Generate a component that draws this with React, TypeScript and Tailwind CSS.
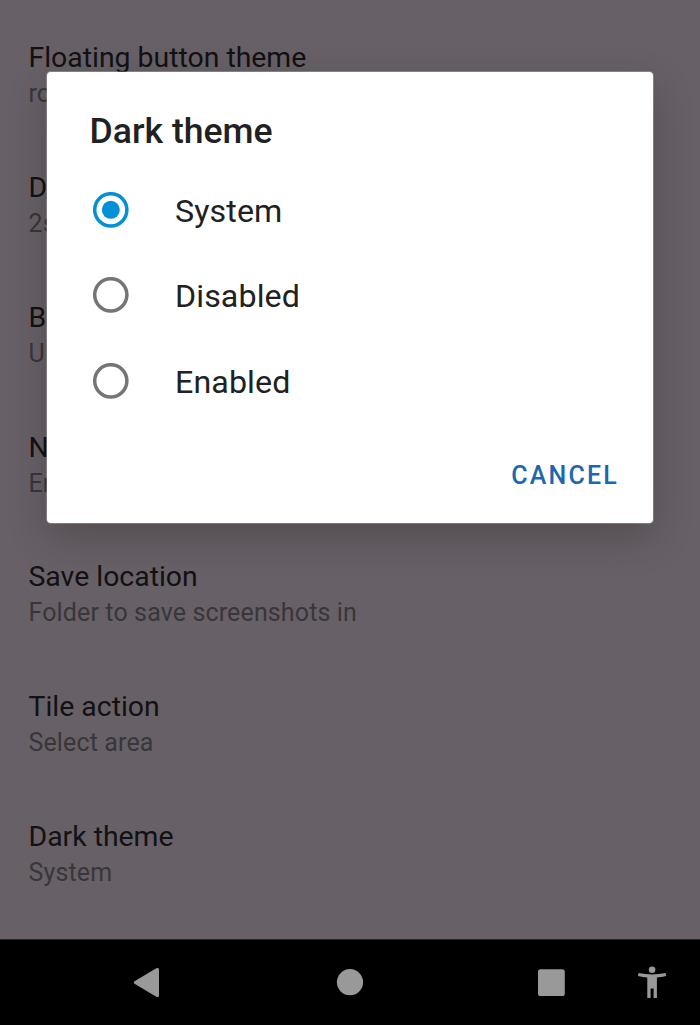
import React from "react";

const settings = [
  { title: "Floating button theme", summary: "round" },
  { title: "Delay", summary: "2s" },
  { title: "Button", summary: "U" },
  { title: "Notification", summary: "Enabled" },
  { title: "Save location", summary: "Folder to save screenshots in" },
  { title: "Tile action", summary: "Select area" },
  { title: "Dark theme", summary: "System" },
];

function Radio({ checked }: { checked: boolean }) {
  return (
    <svg width="36" height="36" viewBox="0 0 36 36" className={checked ? "text-[#0390d7]" : "text-[#757575]"}>
      <circle cx="17.8" cy="17.8" r="16.1" fill="none" stroke="currentColor" strokeWidth="3.5" />
      {checked && <circle cx="17.8" cy="17.8" r="9" fill="currentColor" />}
    </svg>
  );
}

export default function App() {
  return (
    <div className="relative flex h-[1025px] w-[700px] flex-col overflow-hidden bg-[#676066] font-['Roboto',sans-serif]">
      <main className="h-[939px] shrink-0 overflow-hidden pt-[40.3px] pl-[28.5px]">
        {settings.map((s) => (
          <div key={s.title} className="h-[129.75px] whitespace-nowrap">
            <div className="text-[28.4px] leading-[36px] text-[#121113]">{s.title}</div>
            <div className="text-[25px] leading-[36px] tracking-[0.13px] text-[#39363a]">{s.summary}</div>
          </div>
        ))}
      </main>

      <nav className="h-[86px] shrink-0 border-t border-[#292629] bg-black text-[#999999]">
        <svg width="700" height="85" viewBox="0 940 700 85" fill="currentColor">
          <path d="M134.5 981.2 L156.3 968.3 Q159 967 159 969.8 V995.2 Q159 998 156.3 996.7 L134.5 983.8 Q132.900 982.500 134.500 981.200Z" />
          <circle cx="350" cy="982.2" r="13.1" />
          <rect x="538" y="969.2" width="26.8" height="26.8" rx="2.6" />
          <circle cx="652.1" cy="969.7" r="3.3" />
          <path d="M638.6 973 Q652 975.800 665.600 973 L666.200 976 Q661.500 977.200 656.900 977.600 V997.900 H653.600 V988.400 H650.600 V997.900 H647.300 V977.600 Q642.700 977.200 638 976Z" />
        </svg>
      </nav>

      <div role="dialog" className="absolute top-[72px] left-[47px] flex h-[451px] w-[606px] flex-col rounded-[4px] bg-white pl-[42.5px] text-[#212121] shadow-[0_0_0_1px_rgba(255,255,255,0.22),0_14px_40px_rgba(0,0,0,0.2)]">
        <h1 className="mt-[37px] text-[35.6px] leading-[44px] font-medium">Dark theme</h1>
        <div className="mt-[14px]">
          {["System", "Disabled", "Enabled"].map((label, i) => (
            <div key={label} className="flex h-[85.5px] items-center gap-[46px] pl-[3.5px]">
              <Radio checked={i === 0} />
              <span className="pt-[2px] text-[32.2px] leading-[40px] tracking-[0.1px]">{label}</span>
            </div>
          ))}
        </div>
        <button className="mt-[36.2px] mr-[34px] self-end text-[25px] leading-[32px] font-medium tracking-[2.2px] text-[#1b68af]">CANCEL</button>
      </div>
    </div>
  );
}
